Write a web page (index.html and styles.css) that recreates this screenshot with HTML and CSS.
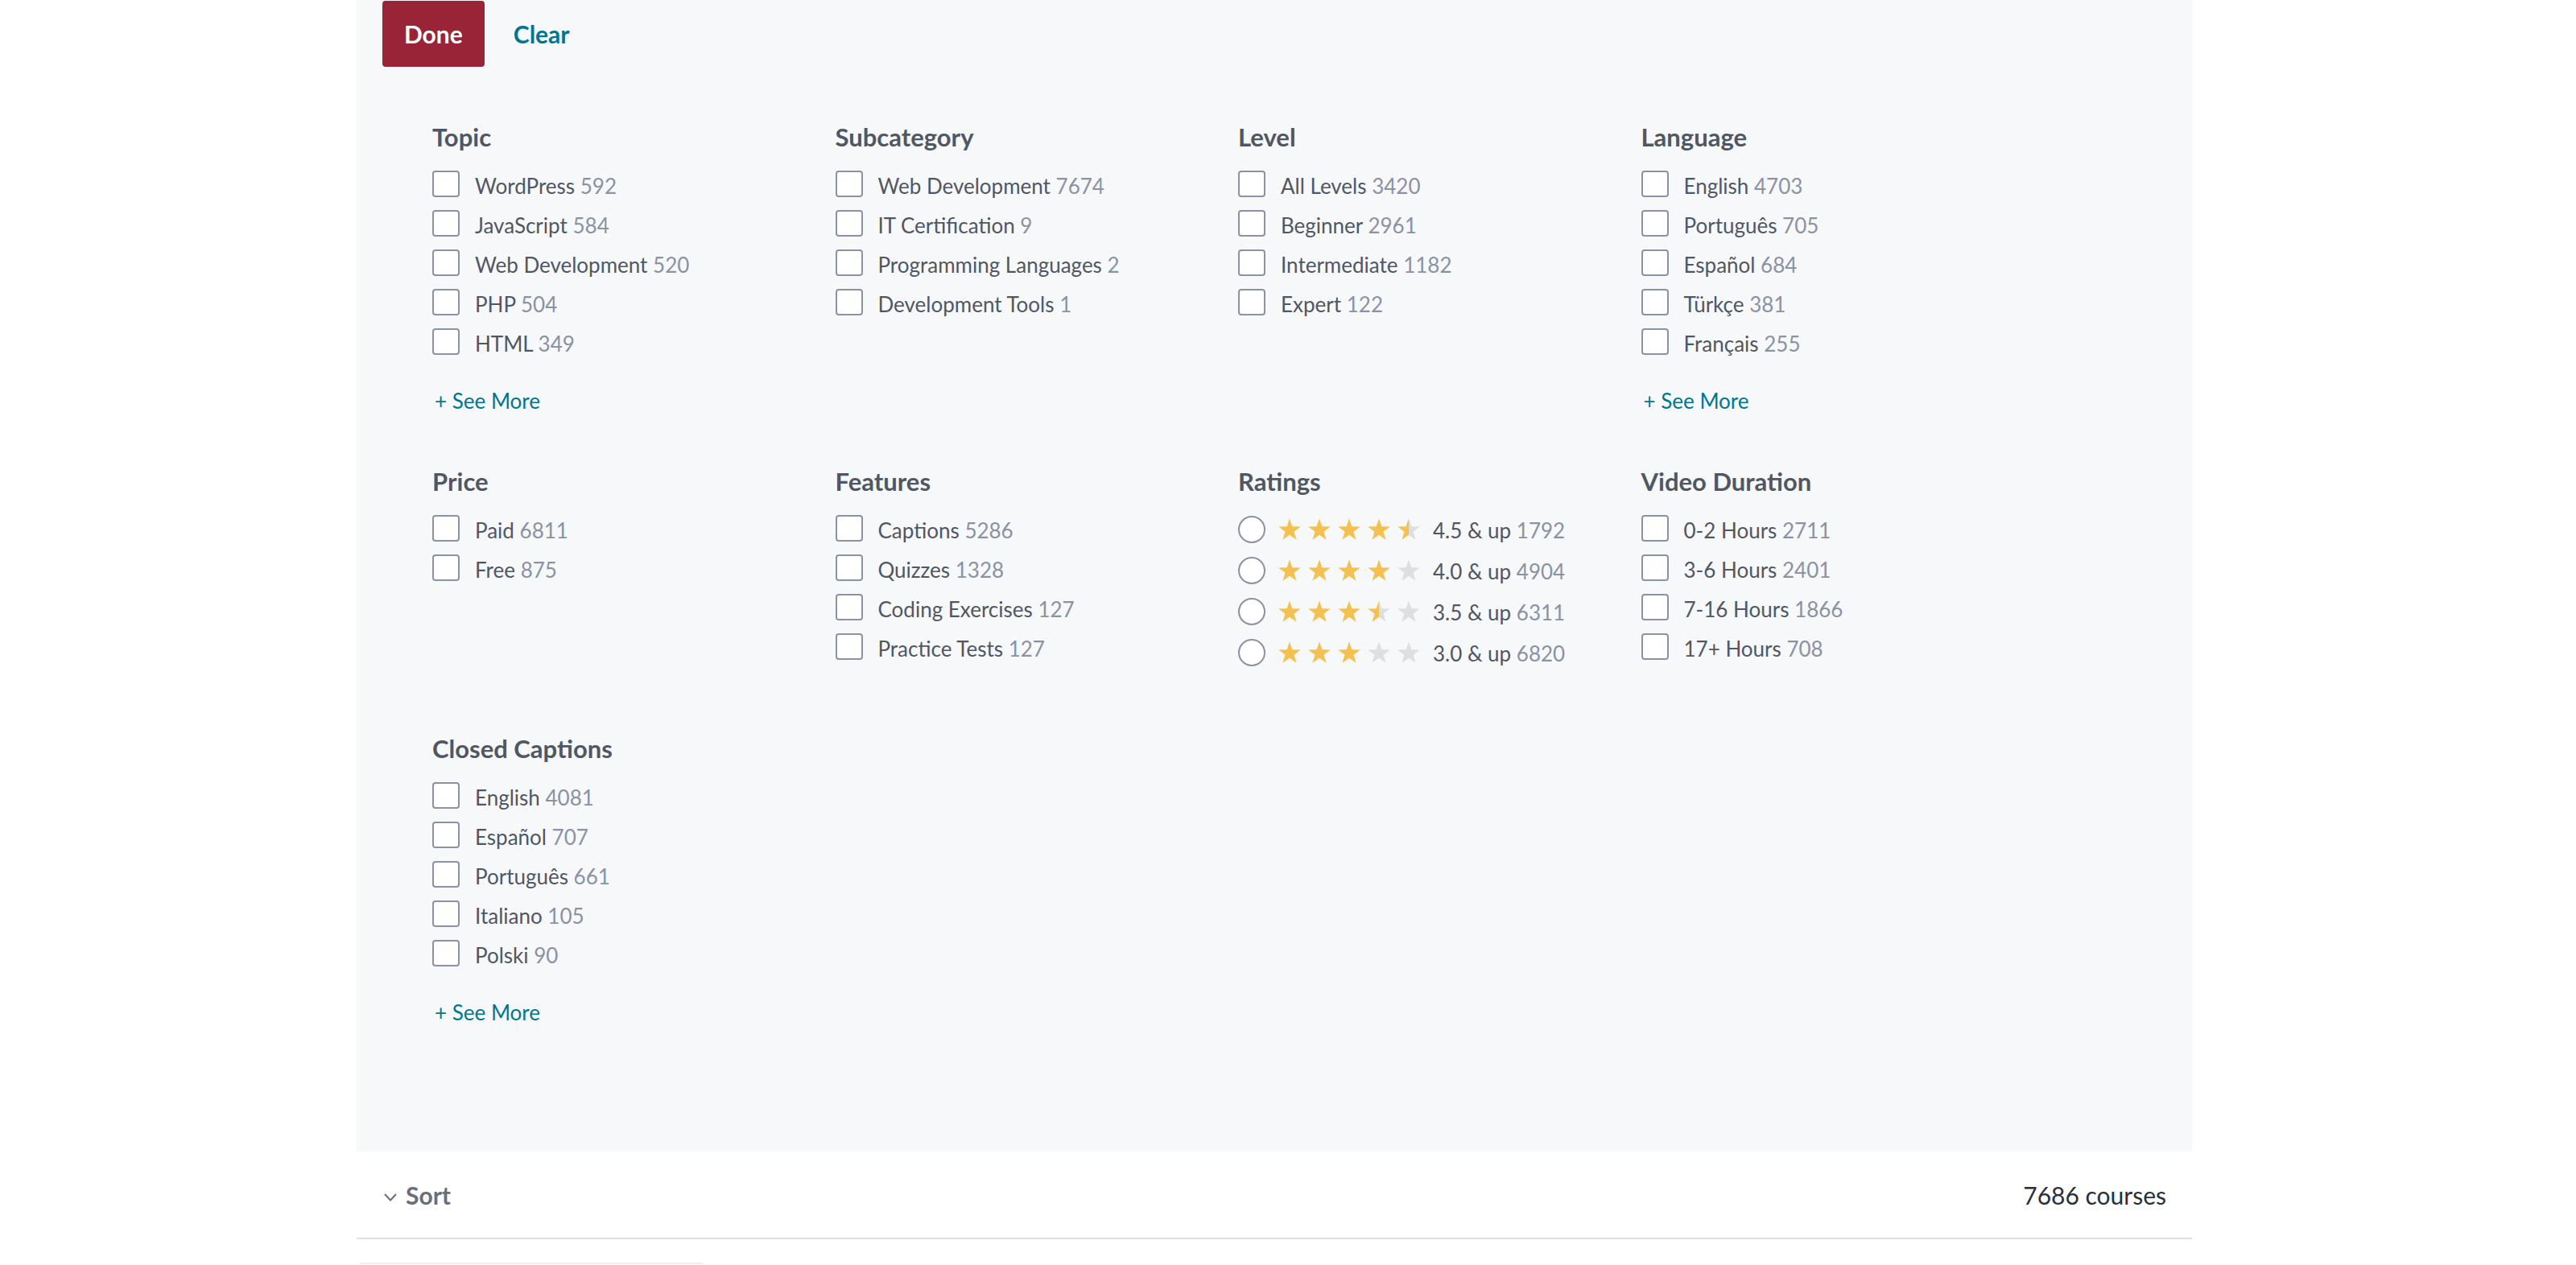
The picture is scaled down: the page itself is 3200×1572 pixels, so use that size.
FILE: index.html
```html
<!DOCTYPE html>
<html lang="en">
<head>
<meta charset="utf-8">
<title>Filters</title>
<link rel="stylesheet" href="styles.css">
</head>
<body>
<svg class="svg-defs" aria-hidden="true">
  <defs>
    <linearGradient id="half" x1="0" y1="0" x2="1" y2="0">
      <stop offset="50%" stop-color="#f4c150"/>
      <stop offset="50%" stop-color="#dedfe0"/>
    </linearGradient>
    <symbol id="star" viewBox="0 0 28 27">
      <polygon points="14,0.5 17.41,10.31 27.79,10.52 19.52,16.79 22.52,26.73 14,20.8 5.48,26.73 8.48,16.79 0.21,10.52 10.59,10.31"/>
    </symbol>
  </defs>
</svg>
<div class="page">
  <section class="panel">
    <div class="actions">
      <button class="btn-done">Done</button>
      <button class="btn-clear">Clear</button>
    </div>
    <div class="filters">
      <div class="group">
        <h3 class="group-title">Topic</h3>
        <ul class="options">
          <li class="option"><span class="checkbox"></span><span class="label">WordPress <span class="count">592</span></span></li>
          <li class="option"><span class="checkbox"></span><span class="label">JavaScript <span class="count">584</span></span></li>
          <li class="option"><span class="checkbox"></span><span class="label">Web Development <span class="count">520</span></span></li>
          <li class="option"><span class="checkbox"></span><span class="label">PHP <span class="count">504</span></span></li>
          <li class="option"><span class="checkbox"></span><span class="label">HTML <span class="count">349</span></span></li>
        </ul>
        <a class="see-more">+ See More</a>
      </div>
      <div class="group">
        <h3 class="group-title">Subcategory</h3>
        <ul class="options">
          <li class="option"><span class="checkbox"></span><span class="label">Web Development <span class="count">7674</span></span></li>
          <li class="option"><span class="checkbox"></span><span class="label">IT Certification <span class="count">9</span></span></li>
          <li class="option"><span class="checkbox"></span><span class="label">Programming Languages <span class="count">2</span></span></li>
          <li class="option"><span class="checkbox"></span><span class="label">Development Tools <span class="count">1</span></span></li>
        </ul>
      </div>
      <div class="group">
        <h3 class="group-title">Level</h3>
        <ul class="options">
          <li class="option"><span class="checkbox"></span><span class="label">All Levels <span class="count">3420</span></span></li>
          <li class="option"><span class="checkbox"></span><span class="label">Beginner <span class="count">2961</span></span></li>
          <li class="option"><span class="checkbox"></span><span class="label">Intermediate <span class="count">1182</span></span></li>
          <li class="option"><span class="checkbox"></span><span class="label">Expert <span class="count">122</span></span></li>
        </ul>
      </div>
      <div class="group">
        <h3 class="group-title">Language</h3>
        <ul class="options">
          <li class="option"><span class="checkbox"></span><span class="label">English <span class="count">4703</span></span></li>
          <li class="option"><span class="checkbox"></span><span class="label">Português <span class="count">705</span></span></li>
          <li class="option"><span class="checkbox"></span><span class="label">Español <span class="count">684</span></span></li>
          <li class="option"><span class="checkbox"></span><span class="label">Türkçe <span class="count">381</span></span></li>
          <li class="option"><span class="checkbox"></span><span class="label">Français <span class="count">255</span></span></li>
        </ul>
        <a class="see-more">+ See More</a>
      </div>

      <div class="group">
        <h3 class="group-title">Price</h3>
        <ul class="options">
          <li class="option"><span class="checkbox"></span><span class="label">Paid <span class="count">6811</span></span></li>
          <li class="option"><span class="checkbox"></span><span class="label">Free <span class="count">875</span></span></li>
        </ul>
      </div>
      <div class="group">
        <h3 class="group-title">Features</h3>
        <ul class="options">
          <li class="option"><span class="checkbox"></span><span class="label">Captions <span class="count">5286</span></span></li>
          <li class="option"><span class="checkbox"></span><span class="label">Quizzes <span class="count">1328</span></span></li>
          <li class="option"><span class="checkbox"></span><span class="label">Coding Exercises <span class="count">127</span></span></li>
          <li class="option"><span class="checkbox"></span><span class="label">Practice Tests <span class="count">127</span></span></li>
        </ul>
      </div>
      <div class="group">
        <h3 class="group-title">Ratings</h3>
        <ul class="options">
          <li class="rating"><span class="radio"></span><span class="stars">
            <svg class="star full"><use href="#star"/></svg><svg class="star full"><use href="#star"/></svg><svg class="star full"><use href="#star"/></svg><svg class="star full"><use href="#star"/></svg><svg class="star half"><use href="#star"/></svg>
          </span><span class="label">4.5 &amp; up <span class="count">1792</span></span></li>
          <li class="rating"><span class="radio"></span><span class="stars">
            <svg class="star full"><use href="#star"/></svg><svg class="star full"><use href="#star"/></svg><svg class="star full"><use href="#star"/></svg><svg class="star full"><use href="#star"/></svg><svg class="star empty"><use href="#star"/></svg>
          </span><span class="label">4.0 &amp; up <span class="count">4904</span></span></li>
          <li class="rating"><span class="radio"></span><span class="stars">
            <svg class="star full"><use href="#star"/></svg><svg class="star full"><use href="#star"/></svg><svg class="star full"><use href="#star"/></svg><svg class="star half"><use href="#star"/></svg><svg class="star empty"><use href="#star"/></svg>
          </span><span class="label">3.5 &amp; up <span class="count">6311</span></span></li>
          <li class="rating"><span class="radio"></span><span class="stars">
            <svg class="star full"><use href="#star"/></svg><svg class="star full"><use href="#star"/></svg><svg class="star full"><use href="#star"/></svg><svg class="star empty"><use href="#star"/></svg><svg class="star empty"><use href="#star"/></svg>
          </span><span class="label">3.0 &amp; up <span class="count">6820</span></span></li>
        </ul>
      </div>
      <div class="group">
        <h3 class="group-title">Video Duration</h3>
        <ul class="options">
          <li class="option"><span class="checkbox"></span><span class="label">0-2 Hours <span class="count">2711</span></span></li>
          <li class="option"><span class="checkbox"></span><span class="label">3-6 Hours <span class="count">2401</span></span></li>
          <li class="option"><span class="checkbox"></span><span class="label">7-16 Hours <span class="count">1866</span></span></li>
          <li class="option"><span class="checkbox"></span><span class="label">17+ Hours <span class="count">708</span></span></li>
        </ul>
      </div>

      <div class="group">
        <h3 class="group-title">Closed Captions</h3>
        <ul class="options">
          <li class="option"><span class="checkbox"></span><span class="label">English <span class="count">4081</span></span></li>
          <li class="option"><span class="checkbox"></span><span class="label">Español <span class="count">707</span></span></li>
          <li class="option"><span class="checkbox"></span><span class="label">Português <span class="count">661</span></span></li>
          <li class="option"><span class="checkbox"></span><span class="label">Italiano <span class="count">105</span></span></li>
          <li class="option"><span class="checkbox"></span><span class="label">Polski <span class="count">90</span></span></li>
        </ul>
        <a class="see-more">+ See More</a>
      </div>
    </div>
  </section>

  <div class="sortbar">
    <button class="sort-toggle">
      <svg class="chevron" viewBox="0 0 16 10"><polyline points="1,1 8,8.5 15,1"/></svg>
      <span>Sort</span>
    </button>
    <span class="total">7686 courses</span>
  </div>
  <div class="next-card"></div>
</div>
</body>
</html>
```

FILE: styles.css
```css
* { box-sizing: border-box; }

html, body {
  margin: 0;
  padding: 0;
  background: #ffffff;
}

body {
  font-family: Lato, "Open Sans", "Liberation Sans", sans-serif;
  color: #505763;
  overflow: hidden;
}

.svg-defs {
  position: absolute;
  width: 0;
  height: 0;
  overflow: hidden;
}

.page {
  width: 2280px;
  margin-left: 443px;
}

.panel {
  background: #f7f8fa;
  padding: 1px 0 159px 32px;
}

.actions {
  display: flex;
  align-items: center;
  gap: 36px;
  height: 82px;
}

.btn-done {
  height: 82px;
  padding: 0 27px;
  border: none;
  border-radius: 4px;
  background: #992337;
  color: #ffffff;
  font-family: inherit;
  font-size: 30px;
  font-weight: 700;
  cursor: pointer;
}

.btn-clear {
  padding: 0;
  border: none;
  background: transparent;
  color: #007791;
  font-family: inherit;
  font-size: 30px;
  font-weight: 700;
  cursor: pointer;
}

.filters {
  display: grid;
  grid-template-columns: repeat(4, 500.5px);
  row-gap: 68px;
  margin: 69px 0 0 62px;
  align-items: start;
}

.group-title {
  margin: 0 0 24px;
  font-size: 31px;
  line-height: 36px;
  font-weight: 700;
  color: #505763;
}

.options {
  list-style: none;
  margin: 0;
  padding: 0;
}

.option {
  display: flex;
  align-items: flex-start;
  height: 33px;
  margin-bottom: 16px;
}

.checkbox {
  flex: none;
  width: 34px;
  height: 33px;
  border: 2px solid #8a92a3;
  border-radius: 4px;
  background: #ffffff;
  margin-right: 19px;
}

.label {
  font-size: 26px;
  line-height: 33px;
  padding-top: 3px;
  color: #505763;
  white-space: nowrap;
}

.count {
  color: #8a92a3;
}

.rating {
  display: flex;
  align-items: center;
  height: 35px;
  margin-bottom: 16px;
}

.rating .label {
  padding-top: 4px;
}

.radio {
  flex: none;
  width: 34px;
  height: 34px;
  border: 2px solid #8a92a3;
  border-radius: 50%;
  background: #ffffff;
  margin-right: 16px;
}

.stars {
  display: flex;
  gap: 9px;
  margin-right: 16px;
}

.star {
  width: 28px;
  height: 27px;
  display: block;
}

.star.full { fill: #f4c150; }
.star.half { fill: url(#half); }
.star.empty { fill: #dedfe0; }

.see-more {
  display: block;
  margin-top: 43px;
  padding-left: 3px;
  font-size: 26px;
  line-height: 28px;
  color: #007791;
  cursor: pointer;
}

.sortbar {
  display: flex;
  align-items: center;
  justify-content: space-between;
  height: 109px;
  padding: 0 32px 0 34px;
  border-bottom: 2px solid #dedfe0;
}

.sort-toggle {
  display: flex;
  align-items: center;
  gap: 11px;
  padding: 0;
  border: none;
  background: transparent;
  font-family: inherit;
  font-size: 30px;
  font-weight: 700;
  color: #686f7a;
  cursor: pointer;
}

.chevron {
  width: 16px;
  height: 10px;
  fill: none;
  stroke: #686f7a;
  stroke-width: 2;
  margin-top: 6px;
}

.total {
  font-size: 30px;
  color: #29303b;
}

.next-card {
  width: 427px;
  height: 2px;
  margin: 29px 0 0 4px;
  background: #eeeff1;
}
```
